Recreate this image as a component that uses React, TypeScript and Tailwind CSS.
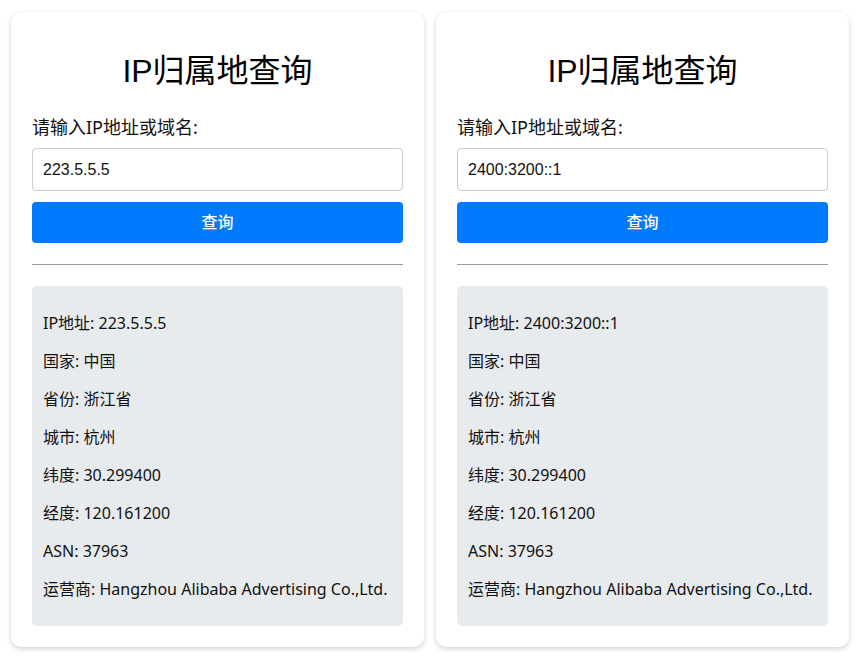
const results = [
  {
    ip: '223.5.5.5',
    rows: [
      ['IP地址', '223.5.5.5'],
      ['国家', '中国'],
      ['省份', '浙江省'],
      ['城市', '杭州'],
      ['纬度', '30.299400'],
      ['经度', '120.161200'],
      ['ASN', '37963'],
      ['运营商', 'Hangzhou Alibaba Advertising Co.,Ltd.'],
    ],
  },
  {
    ip: '2400:3200::1',
    rows: [
      ['IP地址', '2400:3200::1'],
      ['国家', '中国'],
      ['省份', '浙江省'],
      ['城市', '杭州'],
      ['纬度', '30.299400'],
      ['经度', '120.161200'],
      ['ASN', '37963'],
      ['运营商', 'Hangzhou Alibaba Advertising Co.,Ltd.'],
    ],
  },
];

function QueryCard({ ip, rows }: { ip: string; rows: string[][] }) {
  return (
    <div className="flex-1 rounded-[10px] bg-white pt-[20px] px-[21px] pb-[21px] shadow-[0_2px_5px_rgba(0,0,0,0.18)]">
      {/* 标题 */}
      <h1 className="mt-[20px] h-[38px] text-center text-[32px] leading-[38px] text-black">
        IP归属地查询
      </h1>

      {/* 输入 */}
      <label className="mt-[25px] block font-['Noto_Sans','Noto_Sans_CJK_SC',sans-serif] text-[18px] leading-[24px] text-[#111]">
        请输入IP地址或域名:
      </label>
      <input
        className="mt-[9px] block h-[43px] w-full rounded-[4px] border border-[#ccc] px-[10px] text-[16px] text-[#111] outline-none"
        defaultValue={ip}
      />
      <button
        type="button"
        className="mt-[11px] block h-[41px] w-full rounded-[4px] bg-[#007bff] text-[16px] font-medium text-white"
      >
        查询
      </button>

      <hr className="mt-[21px] border-0 border-t border-[#9a9a9a]" />

      {/* 结果 */}
      <div className="mt-[21px] rounded-[5px] bg-[#e8ebee] px-[11px] py-[10px] font-['Noto_Sans','Noto_Sans_CJK_SC',sans-serif]">
        {rows.map(([k, v]) => (
          <p key={k} className="my-[16px] h-[22px] whitespace-nowrap text-[16px] leading-[22px] text-[#111]">
            {k}: {v}
          </p>
        ))}
      </div>
    </div>
  );
}

export default function App() {
  return (
    <div
      className="flex min-h-[660px] items-start gap-[12px] bg-white px-[11px] pt-[12px]"
      style={{ fontFamily: '"Liberation Sans", "Noto Sans CJK SC", sans-serif' }}
    >
      {results.map((r) => (
        <QueryCard key={r.ip} ip={r.ip} rows={r.rows} />
      ))}
    </div>
  );
}
